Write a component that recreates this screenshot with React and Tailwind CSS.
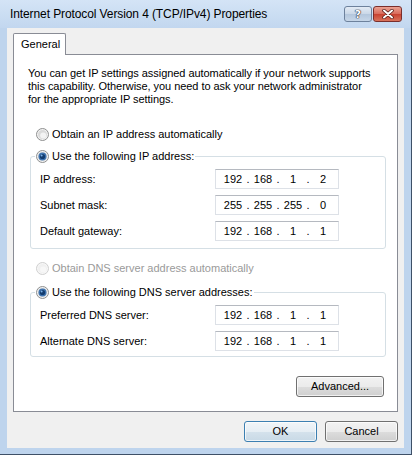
import React from 'react';

const Radio = ({ checked, disabled }) => (
  <svg width="13" height="13" viewBox="0 0 13 13" className="shrink-0">
    <circle cx="6.5" cy="6.5" r="6" fill={disabled ? '#f7f7f7' : '#f2f2f2'} stroke={disabled ? '#cfcfcf' : '#8e8f8f'} />
    <circle cx="6.5" cy="6.5" r="4.5" fill={disabled ? '#f0f0f0' : '#dadada'} />
    <circle cx="7.2" cy="7.4" r="3" fill={disabled ? '#f7f7f7' : '#f3f3f3'} />
    {checked && (
      <>
        <circle cx="6.5" cy="6.5" r="4" fill="#3f74b0" />
        <circle cx="6.5" cy="6.5" r="2.6" fill="#133c6e" />
        <circle cx="5.6" cy="5.5" r="1" fill="#7eb3e8" />
      </>
    )}
  </svg>
);

const IpField = ({ value }) => {
  const parts = value.split('.');
  return (
    <div className="w-[124px] h-[20px] flex items-center pl-[6px] bg-white border border-[#dde1e7] border-t-[#b5b9c0]">
      {parts.map((p, i) => (
        <React.Fragment key={i}>
          {i > 0 && <span className="w-[8px] text-center">.</span>}
          <span className="w-[22px] text-center">{p}</span>
        </React.Fragment>
      ))}
    </div>
  );
};

const Row = ({ label, value }) => (
  <div className="flex items-center h-[20px]">
    <span className="w-[175px]">{label}</span>
    <IpField value={value} />
  </div>
);

const Group = ({ title, rows, pb }) => (
  <fieldset className={`ml-[2px] w-[356px] border border-[#d5dfe5] rounded-[3px] ${pb}`}>
    <legend className="ml-[4px] px-[1px]">
      <span className="flex items-center gap-[3px] h-[16px]">
        <Radio checked />
        <span>{title}</span>
      </span>
    </legend>
    <div className="flex flex-col gap-[6px] pl-[9px] pt-[5px]">
      {rows.map((r) => (
        <Row key={r.label} label={r.label} value={r.value} />
      ))}
    </div>
  </fieldset>
);

const btn =
  'h-[21px] w-[73px] rounded-[3px] border flex items-center justify-center shadow-[inset_0_0_0_1px_rgba(255,255,255,0.7)]';
const btnFace = 'bg-[linear-gradient(to_bottom,#f2f2f2_0%,#ebebeb_50%,#dddddd_50%,#cfcfcf_100%)] border-[#707070]';

export default function App() {
  return (
    <div className="w-[415px] h-[458px] bg-white font-['Liberation_Sans',sans-serif] text-[11px] leading-[13px] text-black">
      <div className="w-[412px] h-[455px] flex flex-col bg-[#bed4ed] border-r border-b border-[#3e5067]">
        {/* title bar */}
        <div className="h-[28px] flex bg-[linear-gradient(to_bottom,#d4e4f6,#c2d7ef)]">
          <span className="self-center pl-[10px] pt-[1px] text-[12px] tracking-[-0.1px]">Internet Protocol Version 4 (TCP/IPv4) Properties</span>
          <div className="ml-auto mt-[6px] mr-[9px] flex gap-[1px] h-[16px]">
            <div className="w-[28px] h-[16px] rounded-[3px] border border-[#6d819c] bg-[linear-gradient(to_bottom,#e3ebf5_0%,#c9d7e7_50%,#b3c6dc_50%,#c6d6e8_100%)] flex items-center justify-center">
              <span className="font-['DejaVu_Sans',sans-serif] font-bold text-[11px] leading-[11px] text-white [text-shadow:0_0_1px_#223,0_0_1px_#223,0_0_1px_#223]">?</span>
            </div>
            <div className="w-[29px] h-[16px] rounded-[3px] border border-[#7a2e2b] bg-[linear-gradient(to_bottom,#eba192_0%,#d86a5a_50%,#c7402f_50%,#d9735c_100%)] flex items-center justify-center">
              <svg width="12" height="10" viewBox="0 0 12 10">
                <path d="M2 1.5 L10 8.5 M10 1.5 L2 8.5" stroke="#4a1410" strokeWidth="3.4" strokeLinecap="round" />
                <path d="M2 1.5 L10 8.5 M10 1.5 L2 8.5" stroke="#ffffff" strokeWidth="2" strokeLinecap="round" />
              </svg>
            </div>
          </div>
        </div>

        {/* client area */}
        <div className="ml-[7px] w-[397px] h-[420px] bg-[#f0f0f0] flex flex-col px-[6px] pt-[5px]">
          <div className="flex">
            <div className="relative z-10 -mb-px w-[53px] h-[22px] bg-white border border-b-0 border-[#898c95] rounded-t-[2px] pl-[7px] flex items-center">
              General
            </div>
          </div>
          <div className="h-[358px] bg-white border border-[#898c95] flex flex-col pl-[14px] pr-[13px] pt-[12px]">
            <p className="h-[39px] whitespace-nowrap tracking-[-0.05px]">
              You can get IP settings assigned automatically if your network supports
              <br />
              this capability. Otherwise, you need to ask your network administrator
              <br />
              for the appropriate IP settings.
            </p>
            <div className="mt-[20px] h-[16px] ml-[8px] flex items-center gap-[3px]">
              <Radio />
              <span>Obtain an IP address automatically</span>
            </div>
            <div className="mt-[6px]">
              <Group
                title="Use the following IP address:"
                pb="pb-[7px]"
                rows={[
                  { label: 'IP address:', value: '192.168.1.2' },
                  { label: 'Subnet mask:', value: '255.255.255.0' },
                  { label: 'Default gateway:', value: '192.168.1.1' },
                ]}
              />
            </div>
            <div className="mt-[11px] h-[16px] ml-[8px] flex items-center gap-[3px] text-[#9a9a9a]">
              <Radio disabled />
              <span>Obtain DNS server address automatically</span>
            </div>
            <div className="mt-[8px]">
              <Group
                title="Use the following DNS server addresses:"
                pb="pb-[5px]"
                rows={[
                  { label: 'Preferred DNS server:', value: '192.168.1.1' },
                  { label: 'Alternate DNS server:', value: '192.168.1.1' },
                ]}
              />
            </div>
            <button className={`mt-[19px] self-end h-[21px] w-[88px] rounded-[3px] border flex items-center justify-center shadow-[inset_0_0_0_1px_rgba(255,255,255,0.7)] ${btnFace}`}>
              Advanced...
            </button>
          </div>
          <div className="mt-[9px] flex justify-end gap-[8px]">
            <button className={`${btn} border-[#3c7fb1] bg-[linear-gradient(to_bottom,#f1f5f8_0%,#e6eef4_50%,#d5e2ec_50%,#c8d9e6_100%)] shadow-[inset_0_0_0_1px_#b9e4fb]`}>
              OK
            </button>
            <button className={`${btn} ${btnFace}`}>Cancel</button>
          </div>
        </div>
      </div>
    </div>
  );
}
